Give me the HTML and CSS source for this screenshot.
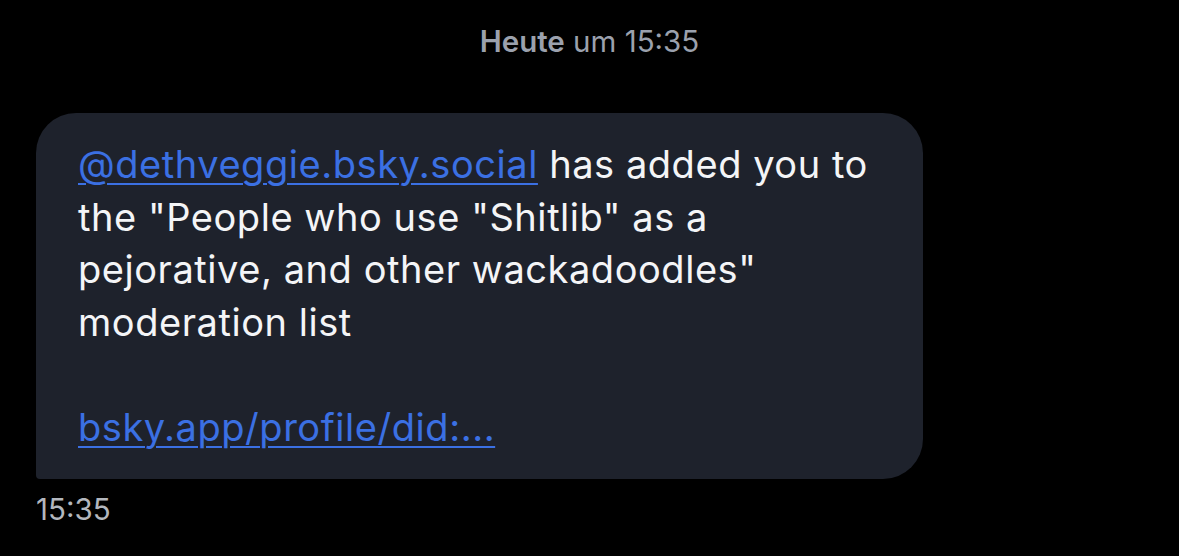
FILE: index.html
```html
<!DOCTYPE html>
<html lang="de">
<head>
<meta charset="utf-8">
<link rel="stylesheet" href="styles.css">
</head>
<body>
<div class="chat">
  <div class="day"><span class="day-bold">Heute</span> um 15:35</div>
  <div class="bubble">
    <p class="msg"><a class="link" href="#">@dethveggie.bsky.social</a> has added you to the "People who use "Shitlib" as a pejorative, and other wackadoodles" moderation list</p>
    <p class="msg"><a class="link" href="#">bsky.app/profile/did:...</a></p>
  </div>
  <div class="time">15:35</div>
</div>
</body>
</html>
```
FILE: styles.css
```css
html, body {
  margin: 0;
  padding: 0;
  background: #000;
}
body {
  font-family: Inter, "Noto Sans", sans-serif;
  width: 1179px;
  height: 556px;
  overflow: hidden;
}
.chat {
  display: flex;
  flex-direction: column;
  align-items: flex-start;
  padding: 23px 0 0 36px;
}
.day {
  align-self: stretch;
  padding-right: 36px;
  text-align: center;
  font-size: 29.5px;
  line-height: 36px;
  color: #9ba1ad;
  margin-bottom: 54px;
}
.day-bold {
  font-weight: 600;
}
.bubble {
  width: 845px;
  background: #1e222c;
  border-radius: 40px 40px 40px 4px;
  padding: 25px 0 26px 42px;
}
.msg {
  margin: 0;
  width: 825px;
  font-size: 38px;
  letter-spacing: 0.55px;
  line-height: 52.5px;
  color: #f4f5f7;
}
.msg + .msg {
  margin-top: 52.5px;
}
.link {
  color: #3b70e3;
  text-decoration: underline;
  text-decoration-thickness: 2px;
  text-underline-offset: 5px;
}
.time {
  margin-top: 12px;
  font-size: 29.5px;
  line-height: 36px;
  color: #b3b7be;
}
```
